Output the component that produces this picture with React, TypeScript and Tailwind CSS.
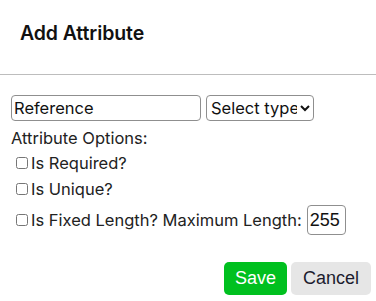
export default function App() {
  return (
    <div className="w-[376px] h-[301px] bg-white text-[#222] font-['Inter','DejaVu_Sans',sans-serif] overflow-hidden">
      <div className="h-[75px] border-b border-[#bdbdbd] px-5 pt-[20px]">
        <h2 className="text-[19.5px] leading-[26px] font-semibold tracking-[-0.1px] text-[#111]">Add Attribute</h2>
      </div>
      <div className="pl-[11px] pr-[5px] pt-[20px]">
        <div className="flex items-center gap-[5px]">
          <input
            defaultValue="Reference"
            className="w-[190px] h-[26px] border border-[#8f8f8f] rounded-[4px] px-[2px] text-[16.5px] text-[#111] outline-none"
          />
          <select className="w-[108px] h-[26px] border border-[#8f8f8f] rounded-[4px] text-[16.5px] text-[#111] outline-none">
            <option>Select type</option>
          </select>
        </div>
        <div className="text-[16.5px] mt-[6px] leading-[22px]">Attribute Options:</div>
        <div className="flex flex-col mt-[3px] text-[16.5px] leading-[22px]">
          <label className="flex items-center">
            <input type="checkbox" className="ml-[5px] mr-[3px] w-[12px] h-[12px]" />
            <span>Is Required?</span>
          </label>
          <label className="flex items-center mt-[4px]">
            <input type="checkbox" className="ml-[5px] mr-[3px] w-[12px] h-[12px]" />
            <span>Is Unique?</span>
          </label>
          <div className="flex items-center mt-[5px]">
            <input type="checkbox" className="ml-[5px] mr-[3px] w-[12px] h-[12px]" />
            <span>Is Fixed Length? Maximum Length:</span>
            <input
              defaultValue="255"
              className="ml-[5px] w-[39px] h-[30px] border border-[#8f8f8f] rounded-[4px] px-[2px] text-[18px] font-['Liberation_Sans',Arial,sans-serif] text-[#111] outline-none"
            />
          </div>
        </div>
        <div className="flex justify-end gap-[4px] mt-[27px]">
          <button className="w-[63px] h-[33px] rounded-[5px] bg-[#00c01f] text-white text-[18px] font-['Liberation_Sans',Arial,sans-serif]">
            Save
          </button>
          <button className="w-[80px] h-[33px] rounded-[5px] bg-[#e6e6e6] text-[#1c1c2e] text-[18px] font-['Liberation_Sans',Arial,sans-serif]">
            Cancel
          </button>
        </div>
      </div>
    </div>
  );
}
